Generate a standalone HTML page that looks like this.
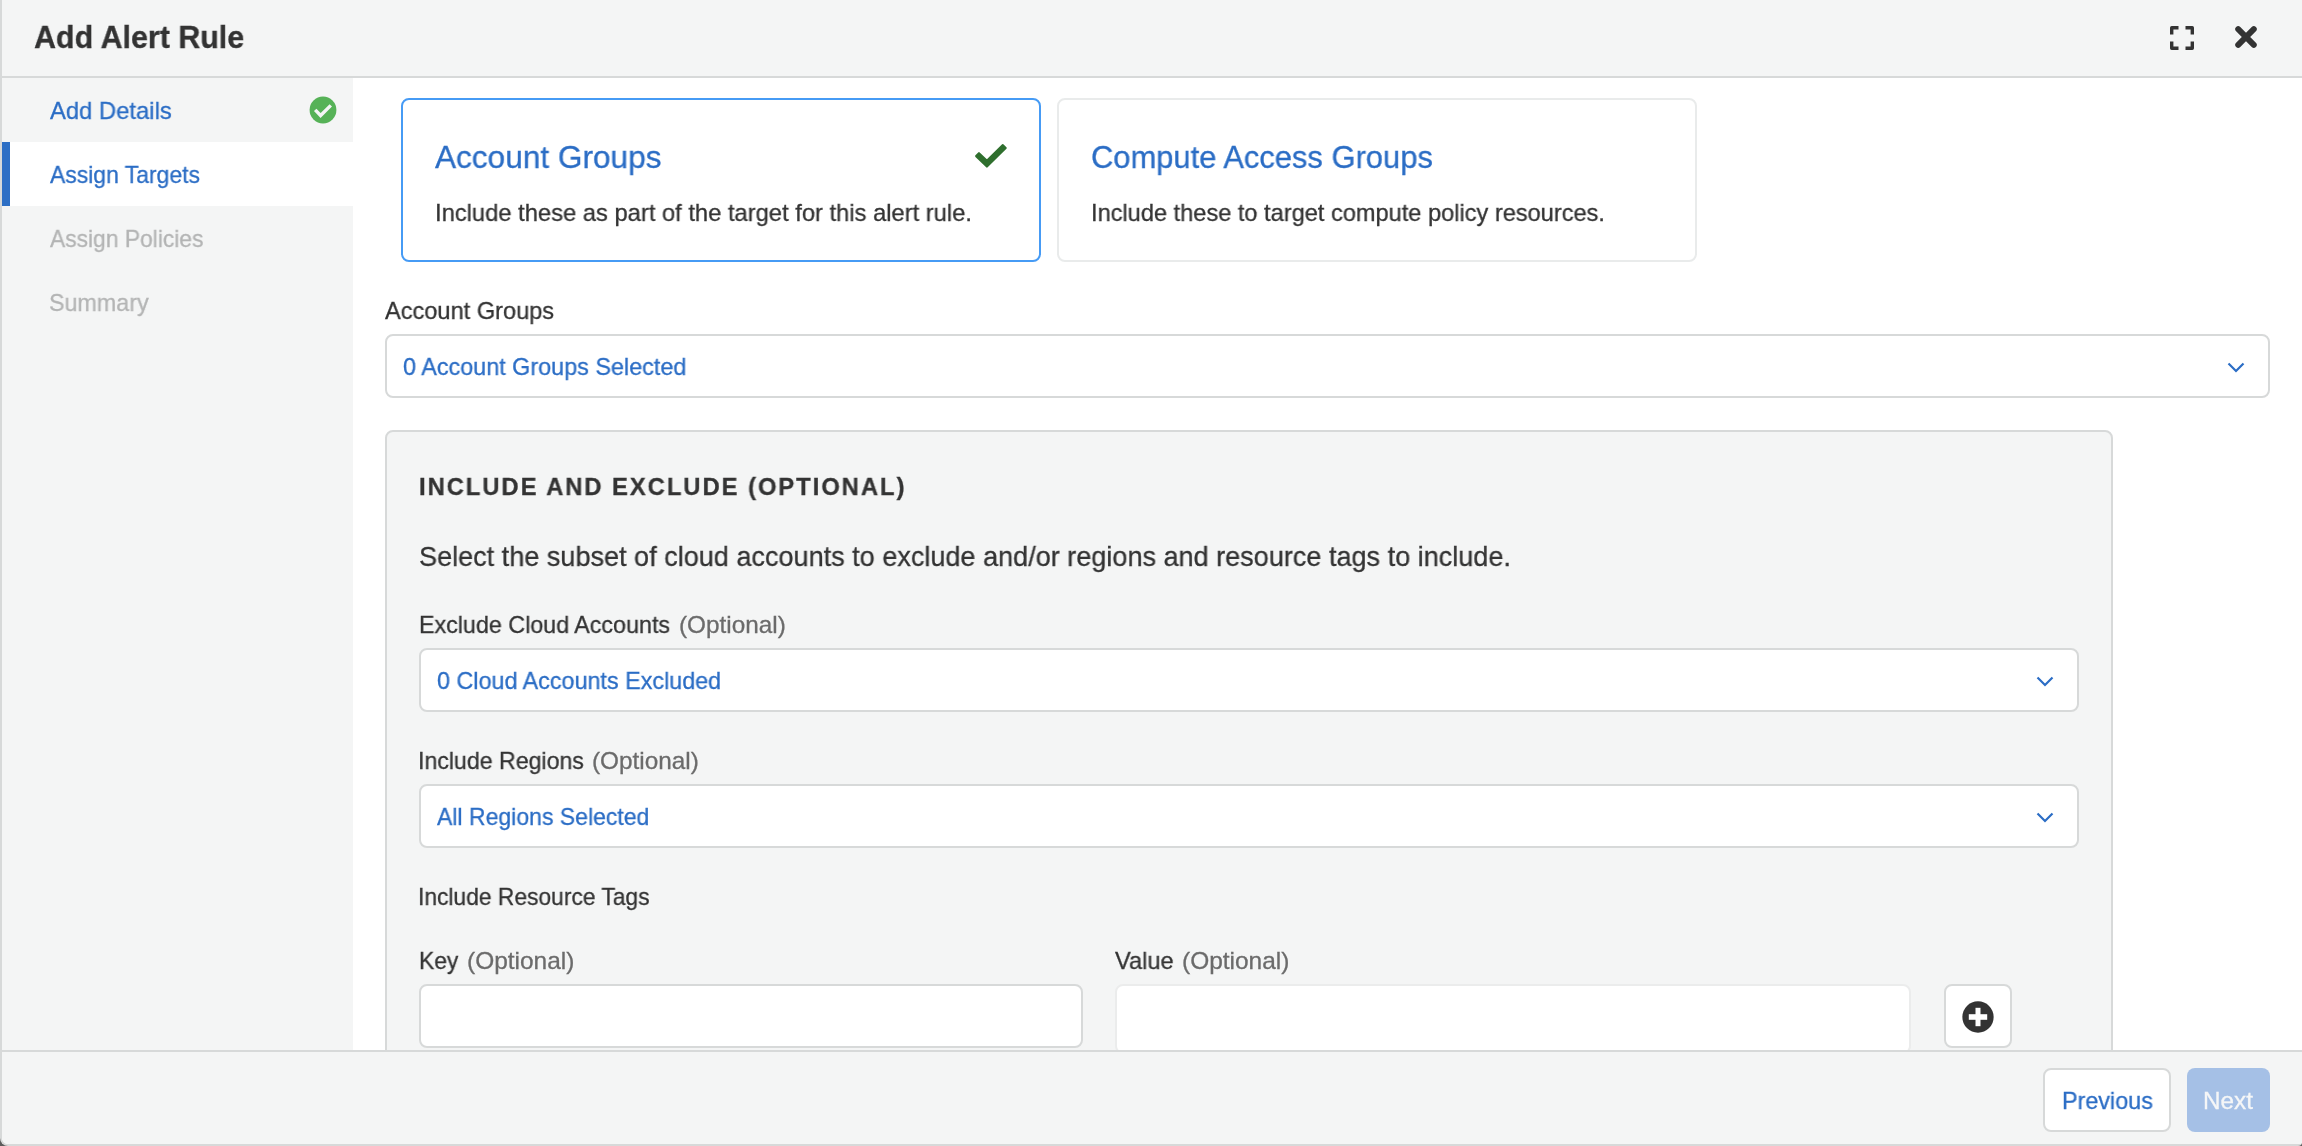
<!DOCTYPE html>
<html lang="en"><head><meta charset="utf-8"><title>Add Alert Rule</title>
<style>
html,body{margin:0;padding:0;}
body{width:2302px;height:1146px;overflow:hidden;background:#5c5c5c;font-family:"Liberation Sans",Arial,sans-serif;}
#modal{position:absolute;left:0;top:0;width:2302px;height:1146px;box-sizing:border-box;background:#fff;border-left:2px solid #d7d9d9;border-bottom:2px solid #d7d9d9;border-radius:0 0 4px 8px;overflow:hidden;}
#modal>*{position:absolute;}
.t{position:absolute;white-space:nowrap;line-height:1;transform-origin:0 0;display:block;will-change:transform;-webkit-text-stroke:0.3px currentColor;}
header{left:-2px;top:0;width:2302px;height:76px;background:#f4f5f5;border-bottom:2px solid #d7d9d9;}
nav{left:0;top:78px;width:351px;height:972px;background:#f4f5f5;}
nav .active{position:absolute;left:0;top:64px;width:351px;height:64px;background:#fff;}
nav .bar{position:absolute;left:0;top:64px;width:8px;height:64px;background:#2d6fc5;}
main{left:351px;top:78px;width:1949px;height:972px;background:#fff;overflow:hidden;}
footer{left:-2px;top:1050px;width:2302px;height:92px;background:#f4f5f5;border-top:2px solid #d7d9d9;}
.abs{position:absolute;box-sizing:border-box;}
.card{position:absolute;box-sizing:border-box;border:2px solid #e9ebeb;border-radius:8px;background:#fff;}
.card.on{border-color:#469bf5;}
.sel{position:absolute;box-sizing:border-box;border:2px solid #d7d9d9;border-radius:8px;background:#fff;}
.sel .chev{position:absolute;right:22px;top:24.5px;}
.panel{position:absolute;box-sizing:border-box;border:2px solid #d7d9d9;border-radius:8px;background:#f4f5f5;}
.inp{position:absolute;box-sizing:border-box;border:2px solid #d7d9d9;border-radius:8px;background:#fff;}
.inp.dis{border-color:#ebecec;}
.btn{position:absolute;box-sizing:border-box;border:2px solid #d7d9d9;border-radius:8px;background:#fff;}
.btn.pri{border:0;background:#a5c0e6;}
svg{position:absolute;display:block;}
</style></head>
<body>
<div id="modal">
<header>
<span class="t" id="title" style="left:33.90px;top:21px;font-size:32px;color:#333333;transform:scaleX(0.9511);font-weight:700;">Add Alert Rule</span>
<svg style="left:2168px;top:24px" width="28" height="28" viewBox="0 0 28 28"><path d="M3.7 10.5V3.7h6.8M17.5 3.7h6.8v6.8M24.3 17.5v6.8h-6.8M10.5 24.3H3.7v-6.8" fill="none" stroke="#333" stroke-width="3.4" stroke-linejoin="round"/></svg>
<svg style="left:2232px;top:23px" width="28" height="28" viewBox="0 0 28 28"><path d="M6.2 6.2L21.8 21.8M21.8 6.2L6.2 21.8" fill="none" stroke="#333" stroke-width="5.9" stroke-linecap="round"/></svg>
</header>
<nav>
<div class="active"></div><div class="bar"></div>
<span class="t" id="nav1" style="left:47.70px;top:21px;font-size:24px;color:#2b6dc5;transform:scaleX(0.9919);">Add Details</span>
<svg style="left:307px;top:18px" width="28" height="28" viewBox="0 0 28 28"><circle cx="14" cy="14" r="13.4" fill="#56b257"/><path d="M6.2 13.8L11.6 19.5 21.8 9.4" fill="none" stroke="#f4f5f5" stroke-width="3.4"/></svg>
<span class="t" id="nav2" style="left:48.00px;top:85px;font-size:24px;color:#2b6dc5;transform:scaleX(0.9555);">Assign Targets</span>
<span class="t" id="nav3" style="left:48.00px;top:149px;font-size:24px;color:#b3b4b4;transform:scaleX(0.9503);">Assign Policies</span>
<span class="t" id="nav4" style="left:47.00px;top:213px;font-size:24px;color:#b3b4b4;transform:scaleX(0.9706);">Summary</span>
</nav>
<main>
<div class="card on" style="left:48px;top:20px;width:640px;height:164px;"></div>
<span class="t" id="c1t" style="left:82.00px;top:63px;font-size:32px;color:#2b6dc5;transform:scaleX(0.9869);">Account Groups</span>
<svg style="left:621px;top:64px" width="34" height="28" viewBox="0 0 34 28"><path d="M2.20 14.10 L12.91 24.50 L31.67 6.00 L28.86 3.15 L12.89 18.90 L4.98 11.23Z" fill="#2f6f2e" stroke="#2f6f2e" stroke-width="2.2" stroke-linejoin="round"/></svg>
<span class="t" id="c1d" style="left:82.00px;top:123px;font-size:24px;color:#333333;transform:scaleX(0.9889);">Include these as part of the target for this alert rule.</span>
<div class="card" style="left:704px;top:20px;width:640px;height:164px;"></div>
<span class="t" id="c2t" style="left:738.00px;top:63px;font-size:32px;color:#2b6dc5;transform:scaleX(0.9659);">Compute Access Groups</span>
<span class="t" id="c2d" style="left:738.00px;top:123px;font-size:24px;color:#333333;transform:scaleX(0.9827);">Include these to target compute policy resources.</span>
<span class="t" id="lab1" style="left:32.00px;top:221px;font-size:24px;color:#333333;transform:scaleX(0.9826);">Account Groups</span>
<div class="sel" style="left:32px;top:256px;width:1885px;height:64px;"><svg class="chev" width="20" height="14" viewBox="0 0 20 14"><path d="M2.5 2.5 L10 10 L17.5 2.5" fill="none" stroke="#2b6dc5" stroke-width="2.2"/></svg></div>
<span class="t" id="sel1" style="left:50.00px;top:277px;font-size:24px;color:#2b6dc5;transform:scaleX(0.9741);">0 Account Groups Selected</span>
<div class="panel" style="left:32px;top:352px;width:1728px;height:670px;"></div>
<span class="t" id="head" style="left:66.00px;top:397px;font-size:24px;color:#333333;transform:scaleX(0.9898);font-weight:700;letter-spacing:2px;">INCLUDE AND EXCLUDE (OPTIONAL)</span>
<span class="t" id="sub" style="left:66.00px;top:465px;font-size:28px;color:#333333;transform:scaleX(0.9663);">Select the subset of cloud accounts to exclude and/or regions and resource tags to include.</span>
<span class="t" id="lab2" style="left:66.00px;top:535px;font-size:24px;color:#333333;transform:scaleX(0.9699);">Exclude Cloud Accounts</span><span class="t" id="opt2" style="left:326.00px;top:535px;font-size:24px;color:#6b6b6b;transform:scaleX(1.0130);">(Optional)</span>
<div class="sel" style="left:66px;top:570px;width:1660px;height:64px;"><svg class="chev" width="20" height="14" viewBox="0 0 20 14"><path d="M2.5 2.5 L10 10 L17.5 2.5" fill="none" stroke="#2b6dc5" stroke-width="2.2"/></svg></div>
<span class="t" id="sel2" style="left:84.00px;top:591px;font-size:24px;color:#2b6dc5;transform:scaleX(0.9724);">0 Cloud Accounts Excluded</span>
<span class="t" id="lab3" style="left:65.00px;top:671px;font-size:24px;color:#333333;transform:scaleX(0.9640);">Include Regions</span><span class="t" id="opt3" style="left:239.00px;top:671px;font-size:24px;color:#6b6b6b;transform:scaleX(1.0135);">(Optional)</span>
<div class="sel" style="left:66px;top:706px;width:1660px;height:64px;"><svg class="chev" width="20" height="14" viewBox="0 0 20 14"><path d="M2.5 2.5 L10 10 L17.5 2.5" fill="none" stroke="#2b6dc5" stroke-width="2.2"/></svg></div>
<span class="t" id="sel3" style="left:84.00px;top:727px;font-size:24px;color:#2b6dc5;transform:scaleX(0.9591);">All Regions Selected</span>
<span class="t" id="lab4" style="left:65.00px;top:807px;font-size:24px;color:#333333;transform:scaleX(0.9502);">Include Resource Tags</span>
<span class="t" id="lab5" style="left:66.00px;top:871px;font-size:24px;color:#333333;transform:scaleX(0.9531);">Key</span><span class="t" id="opt5" style="left:114.00px;top:871px;font-size:24px;color:#6b6b6b;transform:scaleX(1.0193);">(Optional)</span>
<span class="t" id="lab6" style="left:762.00px;top:871px;font-size:24px;color:#333333;transform:scaleX(0.9833);">Value</span><span class="t" id="opt6" style="left:828.50px;top:871px;font-size:24px;color:#6b6b6b;transform:scaleX(1.0193);">(Optional)</span>
<div class="inp" style="left:66px;top:906px;width:664px;height:64px;"></div>
<div class="inp dis" style="left:762px;top:906px;width:796px;height:70px;"></div>
<div class="btn" style="left:1591px;top:906px;width:68px;height:64px;"><svg style="left:16px;top:15px" width="32" height="32" viewBox="0 0 32 32"><circle cx="16" cy="16" r="15.65" fill="#333"/><path d="M16 6.8v18.4" stroke="#fff" stroke-width="5" fill="none"/><path d="M6.8 16h18.4" stroke="#fff" stroke-width="5.6" fill="none"/></svg></div>
</main>
<footer>
<div class="btn" style="left:2043px;top:16px;width:128px;height:64px;"></div>
<span class="t" id="prev" style="left:2062.00px;top:37px;font-size:24px;color:#2b6dc5;transform:scaleX(0.9728);">Previous</span>
<div class="btn pri" style="left:2187px;top:16px;width:83px;height:64px;"></div>
<span class="t" id="next" style="left:2203.00px;top:37px;font-size:24px;color:#f5f6f7;transform:scaleX(1.0116);">Next</span>
</footer>
</div>
</body></html>
